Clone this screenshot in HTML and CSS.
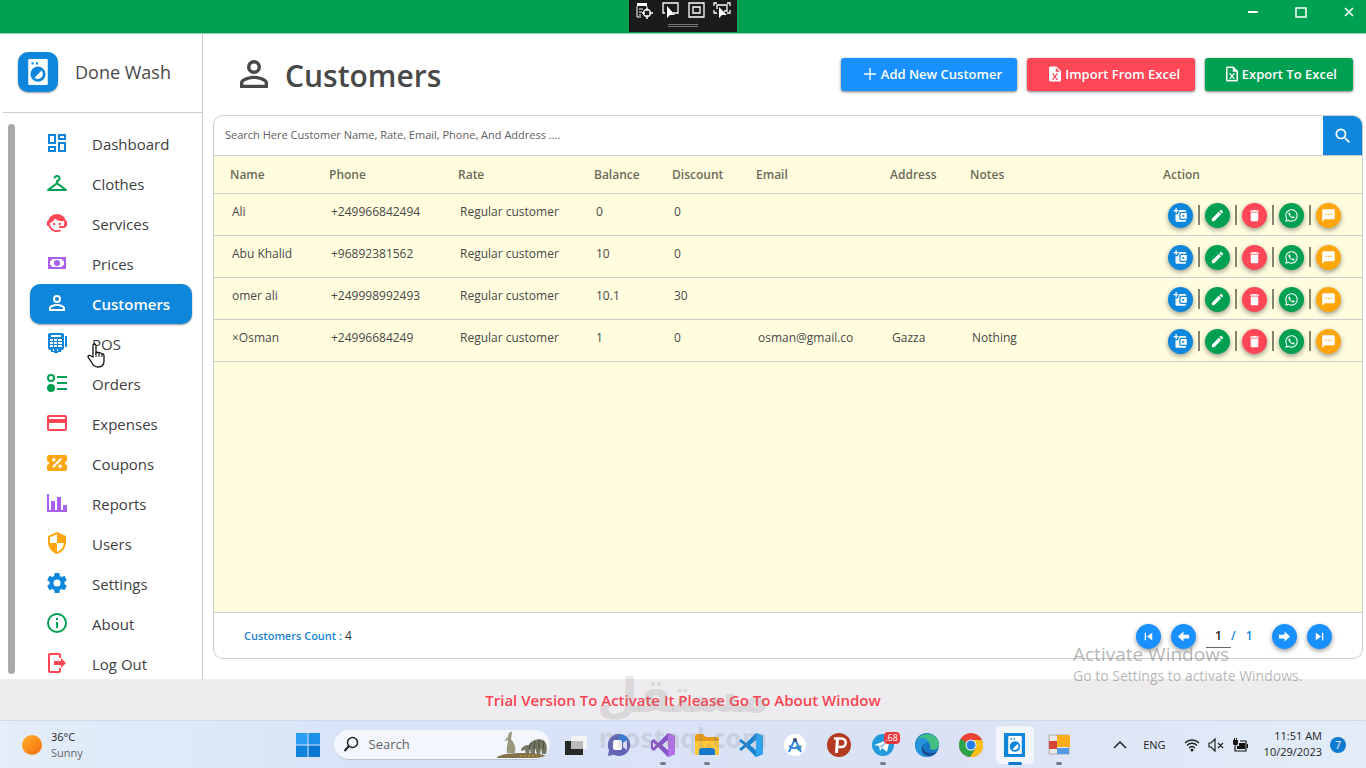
FILE: index.html
```html
<!DOCTYPE html>
<html lang="en">
<head>
<meta charset="utf-8">
<title>Done Wash - Customers</title>
<link rel="stylesheet" href="styles.css">
</head>
<body>
<svg class="sprite" aria-hidden="true">
  <symbol id="i-user" viewBox="0 0 24 24"><path d="M12,4A4,4 0 0,1 16,8A4,4 0 0,1 12,12A4,4 0 0,1 8,8A4,4 0 0,1 12,4M12,6A2,2 0 0,0 10,8A2,2 0 0,0 12,10A2,2 0 0,0 14,8A2,2 0 0,0 12,6M12,13C14.67,13 20,14.33 20,17V20H4V17C4,14.33 9.33,13 12,13M12,14.9C9.03,14.9 5.9,16.36 5.9,17V18.1H18.1V17C18.1,16.36 14.97,14.9 12,14.9Z"/></symbol>
  <symbol id="i-dash" viewBox="0 0 24 24"><path d="M19,5V7H15V5H19M9,5V11H5V5H9M19,13V19H15V13H19M9,17V19H5V17H9M21,3H13V9H21V3M11,3H3V13H11V3M21,11H13V21H21V11M11,15H3V21H11V15Z"/></symbol>
  <symbol id="i-hanger" viewBox="0 0 24 24"><path d="M21.6 18.2L13 11.75v-.91c1.65-.49 2.8-2.17 2.43-4.05-.26-1.31-1.3-2.4-2.61-2.7C10.54 3.57 8.5 5.3 8.5 7.5h2c0-.83.67-1.5 1.5-1.5s1.5.67 1.5 1.5c0 .84-.69 1.52-1.53 1.5-.54-.01-.97.45-.97.99v1.76L2.4 18.2c-.77.58-.36 1.8.6 1.8h18c.96 0 1.37-1.22.6-1.8zM6 18l6-4.5 6 4.5H6z"/></symbol>
  <symbol id="i-agent" viewBox="0 0 24 24"><path d="M12 3C7.6 3 4 6.100 3.200 10.100H2v4.600h1.300C4.500 18.300 7.900 21 12 21c1.500 0 2.700-.3 3.800-.8l-.8-1.600c-.9.4-1.900.6-3 .6-4 0-7.200-3.200-7.200-7.200 2.700-.8 4.500-2.400 5-4.600 2 1.900 5 2.900 9.200 2.700.6 2 .4 3.600-.4 5h-4.500v1.800h5.500l2.400-2.200V10.100h-1.100C20.100 6.100 16.400 3 12 3z"/><circle cx="9.200" cy="13" r="1.200"/><circle cx="14.800" cy="13" r="1.200"/></symbol>
  <symbol id="i-cash" viewBox="0 0 24 24"><path fill-rule="evenodd" d="M3 6h18v12H3zM7 8a2 2 0 0 1-2 2v4a2 2 0 0 1 2 2h10a2 2 0 0 1 2-2v-4a2 2 0 0 1-2-2zM12 9a3 3 0 1 1 0 6 3 3 0 0 1 0-6z"/></symbol>
  <symbol id="i-pos" viewBox="0 0 24 24"><path fill-rule="evenodd" d="M5 2h12a2 2 0 0 1 2 2v13a2 2 0 0 1-2 2h-1v2h-3v1H9v-1H6v-2H5a2 2 0 0 1-2-2V4a2 2 0 0 1 2-2zM6 4v2h10V4zM5 8v2h3V8zM9 8v2h3V8zM13 8v2h4V8zM5 11v2h3v-2zM9 11v2h3v-2zM13 11v2h4v-2zM5 14v2h3v-2zM9 14v2h3v-2zM13 14v2h4v-2zM8 18v2h1v-2zM12 18v2h1v-2z"/><path d="M20 5h2v11h-2z"/></symbol>
  <symbol id="i-orders" viewBox="0 0 24 24"><path fill-rule="evenodd" d="M6 3a4 4 0 1 1 0 8 4 4 0 0 1 0-8zM6 5a2 2 0 1 0 0 4 2 2 0 0 0 0-4z"/><circle cx="6" cy="17" r="4"/><path d="M12 5h10v2H12zM12 11h10v2H12zM12 17h10v2H12z"/></symbol>
  <symbol id="i-card" viewBox="0 0 24 24"><path d="M20,8H4V6H20M20,18H4V12H20M20,4H4C2.890,4 2,4.890 2,6V18A2,2 0 0,0 4,20H20A2,2 0 0,0 22,18V6C22,4.890 21.100,4 20,4Z"/></symbol>
  <symbol id="i-coupon" viewBox="0 0 24 24"><path d="M4,4A2,2 0 0,0 2,6V10A2,2 0 0,1 4,12A2,2 0 0,1 2,14V18A2,2 0 0,0 4,20H20A2,2 0 0,0 22,18V14A2,2 0 0,1 20,12A2,2 0 0,1 22,10V6A2,2 0 0,0 20,4H4M15.500,7L17,8.500L8.500,17L7,15.500L15.500,7M8.810,7.040C9.790,7.040 10.580,7.830 10.580,8.810A1.770,1.770 0 0,1 8.810,10.580C7.830,10.580 7.040,9.790 7.040,8.810A1.770,1.770 0 0,1 8.810,7.040M15.190,13.420C16.170,13.420 16.960,14.210 16.960,15.190A1.770,1.770 0 0,1 15.190,16.960C14.210,16.960 13.420,16.170 13.420,15.190A1.770,1.770 0 0,1 15.190,13.420Z"/></symbol>
  <symbol id="i-chart" viewBox="0 0 24 24"><path d="M2 3h2v16h2v-9h4v9h2V6h4v13h2v-5h4v7H2z"/></symbol>
  <symbol id="i-shield" viewBox="0 0 24 24"><path fill-rule="evenodd" d="M12 1l9 4v6c0 5.550-3.840 10.740-9 12-5.160-1.260-9-6.450-9-12V5zM12 3.200L5 6.300V12h7v8.900c3.700-1.100 6.400-4.900 6.900-8.900H12z"/></symbol>
  <symbol id="i-cog" viewBox="0 0 24 24"><path d="M12,15.500A3.500,3.500 0 0,1 8.500,12A3.500,3.500 0 0,1 12,8.500A3.500,3.500 0 0,1 15.500,12A3.500,3.500 0 0,1 12,15.500M19.430,12.970C19.470,12.650 19.500,12.330 19.500,12C19.500,11.670 19.470,11.340 19.430,11L21.540,9.370C21.730,9.220 21.780,8.950 21.660,8.730L19.660,5.270C19.540,5.050 19.270,4.960 19.050,5.050L16.560,6.050C16.040,5.660 15.500,5.320 14.870,5.070L14.500,2.420C14.460,2.180 14.250,2 14,2H10C9.750,2 9.540,2.180 9.500,2.420L9.130,5.070C8.500,5.320 7.960,5.660 7.440,6.050L4.950,5.050C4.730,4.960 4.460,5.050 4.340,5.270L2.340,8.730C2.210,8.950 2.270,9.220 2.460,9.370L4.570,11C4.530,11.340 4.500,11.670 4.500,12C4.500,12.330 4.530,12.650 4.570,12.970L2.460,14.630C2.270,14.780 2.210,15.050 2.340,15.270L4.340,18.730C4.460,18.950 4.730,19.030 4.950,18.950L7.440,17.940C7.960,18.340 8.500,18.680 9.130,18.930L9.500,21.580C9.540,21.820 9.750,22 10,22H14C14.250,22 14.460,21.820 14.500,21.580L14.870,18.930C15.500,18.670 16.040,18.340 16.560,17.940L19.050,18.950C19.270,19.030 19.540,18.950 19.660,18.730L21.660,15.270C21.780,15.050 21.730,14.780 21.540,14.630L19.430,12.970Z"/></symbol>
  <symbol id="i-info" viewBox="0 0 24 24"><path d="M11,9H13V7H11M12,20C7.590,20 4,16.410 4,12C4,7.590 7.590,4 12,4C16.410,4 20,7.590 20,12C20,16.410 16.410,20 12,20M12,2A10,10 0 0,0 2,12A10,10 0 0,0 12,22A10,10 0 0,0 22,12A10,10 0 0,0 12,2M11,17H13V11H11V17Z"/></symbol>
  <symbol id="i-logout" viewBox="0 0 24 24"><path d="M5 2h9a2 2 0 0 1 2 2v3h-2V4H5v16h9v-3h2v3a2 2 0 0 1-2 2H5a2 2 0 0 1-2-2V4a2 2 0 0 1 2-2z"/><path d="M9 10h7V7l5 5-5 5v-3H9z"/></symbol>
  <symbol id="i-washer" viewBox="0 0 24 24"><path fill-rule="evenodd" d="M4 0h16a1 1 0 0 1 1 1v22a1 1 0 0 1-1 1H4a1 1 0 0 1-1-1V1a1 1 0 0 1 1-1zM12 7a7 7 0 1 0 0 14 7 7 0 0 0 0-14zM6 3v2h2V3zM10 3v2h2V3z"/><path d="M8.800 17.200a4.600 4.600 0 0 0 6.500-6.500z"/></symbol>
  <symbol id="i-plus" viewBox="0 0 24 24"><path d="M11 3h2v8h8v2h-8v8h-2v-8H3v-2h8z"/></symbol>
  <symbol id="i-xls" viewBox="0 0 24 24"><path fill-rule="evenodd" d="M6 2h8l6 6v12a2 2 0 0 1-2 2H6a2 2 0 0 1-2-2V4a2 2 0 0 1 2-2zM13 3.500V9h5.500zM8 11l2.900 4.500L8 20h2l2-3.300L14 20h2l-2.900-4.500L16 11h-2l-2 3.200L10 11z"/></symbol>
  <symbol id="i-xlso" viewBox="0 0 24 24"><path fill-rule="evenodd" d="M6 2h8l6 6v12a2 2 0 0 1-2 2H6a2 2 0 0 1-2-2V4a2 2 0 0 1 2-2zM6 4v16h12V9h-5V4zM8 11l2.900 4L8 19h2l2-3 2 3h2l-2.900-4L16 11h-2l-2 2.800L10 11z"/></symbol>
  <symbol id="i-search" viewBox="0 0 24 24"><path d="M15.500 14h-.79l-.28-.27A6.470 6.470 0 0 0 16 9.500 6.500 6.500 0 1 0 9.500 16c1.610 0 3.090-.59 4.230-1.570l.27.28v.79l5 4.990L20.490 19l-4.990-5zm-6 0C7.010 14 5 11.990 5 9.500S7.010 5 9.500 5 14 7.010 14 9.500 11.990 14 9.500 14z"/></symbol>
  <symbol id="i-wallet" viewBox="0 0 24 24"><path d="M4 0h2v3h3v2H6v3H4V5H1V3h3z"/><path fill-rule="evenodd" d="M10 3h9a2 2 0 0 1 2 2v1h-8a3 3 0 0 0-3 3v7a3 3 0 0 0 3 3h8v1a2 2 0 0 1-2 2H6a2 2 0 0 1-2-2V10h4V7h2zM13 8h9v9h-9a1 1 0 0 1-1-1V9a1 1 0 0 1 1-1zM15 11v3h3v-3z"/></symbol>
  <symbol id="i-pencil" viewBox="0 0 24 24"><path d="M20.710,7.040C21.100,6.650 21.100,6 20.710,5.630L18.370,3.290C18,2.900 17.350,2.900 16.960,3.290L15.120,5.120L18.870,8.870M3,17.250V21H6.750L17.810,9.930L14.060,6.180L3,17.250Z"/></symbol>
  <symbol id="i-trash" viewBox="0 0 24 24"><path d="M19,4H15.500L14.500,3H9.500L8.500,4H5V6H19M6,19A2,2 0 0,0 8,21H16A2,2 0 0,0 18,19V7H6V19Z"/></symbol>
  <symbol id="i-wa" viewBox="0 0 24 24"><path d="M12.040 2C6.580 2 2.130 6.450 2.130 11.910C2.130 13.660 2.590 15.360 3.450 16.860L2.050 22L7.300 20.620C8.750 21.410 10.380 21.830 12.040 21.830C17.500 21.830 21.950 17.380 21.950 11.920C21.950 9.270 20.920 6.780 19.050 4.910C17.180 3.030 14.690 2 12.040 2M12.050 3.670C14.250 3.670 16.310 4.530 17.870 6.090C19.420 7.650 20.280 9.720 20.280 11.920C20.280 16.460 16.580 20.150 12.040 20.150C10.560 20.150 9.110 19.760 7.850 19L7.550 18.830L4.430 19.650L5.260 16.610L5.060 16.290C4.240 15 3.800 13.470 3.800 11.910C3.810 7.370 7.500 3.670 12.050 3.670"/><path d="M8.500 7.300c-.5 0-1.400.7-1.400 2 0 3 4.600 7.300 7.700 7.300 1.400 0 2.300-.9 2.300-2.200l-2.700-1.300-1.300 1.400c-1.500-.6-2.700-1.700-3.400-3l.9-1.300-1.100-2.700c-.2-.2-.5-.2-1-.2z"/></symbol>
  <symbol id="i-chat" viewBox="0 0 24 24"><path d="M20 2H4a2 2 0 0 0-2 2v18l4-4h14a2 2 0 0 0 2-2V4a2 2 0 0 0-2-2zM7 9h2v2H7zm4 0h2v2h-2zm4 0h2v2h-2z"/></symbol>
  <symbol id="i-first" viewBox="0 0 24 24"><path d="M18 18V6l-8.500 6zM6,6H8V18H6z"/></symbol>
  <symbol id="i-last" viewBox="0 0 24 24"><path d="M6 18V6l8.500 6zM16,6H18V18H16z"/></symbol>
  <symbol id="i-prev" viewBox="0 0 24 24"><path d="M3 12l9-8v5h9v6h-9v5z"/></symbol>
  <symbol id="i-next" viewBox="0 0 24 24"><path d="M21 12l-9-8v5H3v6h9v5z"/></symbol>
</svg>

<header class="titlebar">
  <div class="debugbar">
    <svg class="dbg" viewBox="0 0 18 18"><path d="M2 2h10v3H2z" fill="#fff"/><path d="M2 5v11h4M12 5v2M4 8h4M4 11h3M4 14h2" fill="none" stroke="#fff"/><circle cx="12" cy="12" r="3.500" fill="none" stroke="#fff" stroke-width="1.500"/><path d="M12 7v3M12 14v4M7 12h3M14 12h4" stroke="#fff" stroke-width="1.500"/></svg>
    <svg class="dbg" viewBox="0 0 18 18"><path d="M4 12H2V2h15v10h-5" fill="none" stroke="#fff" stroke-width="1.300"/><path d="M6 5v12l3-3h5z" fill="#fff"/></svg>
    <svg class="dbg" viewBox="0 0 18 18"><path d="M2 2h15v14H2zM6 6h7v6H6z" fill="none" stroke="#fff" stroke-width="1.300"/></svg>
    <svg class="dbg" viewBox="0 0 18 18"><path d="M1 5V2h3M14 2h3v3M17 9v3h-3M1 9v3h3M4 8V4h10v6h-3" fill="none" stroke="#fff" stroke-width="1.300"/><path d="M6 6v11l3-3h5z" fill="#fff"/></svg>
    <span class="grip"></span>
  </div>
  <div class="wincontrols">
    <button type="button" aria-label="Minimize"><svg viewBox="0 0 12 12"><path d="M1 6h10" stroke="#fff" stroke-width="2"/></svg></button>
    <button type="button" aria-label="Maximize"><svg viewBox="0 0 12 12"><path d="M1 2h10v9H1z" fill="none" stroke="#fff" stroke-width="1.500"/></svg></button>
    <button type="button" aria-label="Close"><svg viewBox="0 0 12 12"><path d="M2 2l8 8M10 2l-8 8" stroke="#fff" stroke-width="1.500"/></svg></button>
  </div>
</header>

<div class="app">
  <aside class="sidebar">
    <div class="brand">
      <span class="logo"><svg><use href="#i-washer"/></svg></span>
      <span>Done Wash</span>
    </div>
    <div class="navwrap">
      <div class="scrollbar"></div>
      <nav class="nav">
        <a href="#" class="c-blue"><svg><use href="#i-dash"/></svg><span>Dashboard</span></a>
        <a href="#" class="c-green"><svg><use href="#i-hanger"/></svg><span>Clothes</span></a>
        <a href="#" class="c-red"><svg><use href="#i-agent"/></svg><span>Services</span></a>
        <a href="#" class="c-purple"><svg><use href="#i-cash"/></svg><span>Prices</span></a>
        <a href="#" class="active"><svg><use href="#i-user"/></svg><span>Customers</span></a>
        <a href="#" class="c-blue"><svg><use href="#i-pos"/></svg><span>POS</span></a>
        <a href="#" class="c-green"><svg><use href="#i-orders"/></svg><span>Orders</span></a>
        <a href="#" class="c-red"><svg><use href="#i-card"/></svg><span>Expenses</span></a>
        <a href="#" class="c-orange"><svg><use href="#i-coupon"/></svg><span>Coupons</span></a>
        <a href="#" class="c-purple"><svg><use href="#i-chart"/></svg><span>Reports</span></a>
        <a href="#" class="c-orange"><svg><use href="#i-shield"/></svg><span>Users</span></a>
        <a href="#" class="c-blue"><svg><use href="#i-cog"/></svg><span>Settings</span></a>
        <a href="#" class="c-green"><svg><use href="#i-info"/></svg><span>About</span></a>
        <a href="#" class="c-red"><svg><use href="#i-logout"/></svg><span>Log Out</span></a>
      </nav>
    </div>
  </aside>

  <main class="content">
    <div class="pagehead">
      <h1><svg><use href="#i-user"/></svg>Customers</h1>
      <div class="tools">
        <button type="button" class="btn add"><svg><use href="#i-plus"/></svg>Add New Customer</button>
        <button type="button" class="btn import"><svg><use href="#i-xls"/></svg>Import From Excel</button>
        <button type="button" class="btn export"><svg><use href="#i-xlso"/></svg>Export To Excel</button>
      </div>
    </div>

    <section class="card">
      <form class="search">
        <input type="text" aria-label="Search customers" placeholder="Search Here Customer Name, Rate, Email, Phone, And Address ....">
        <button type="button" aria-label="Search"><svg><use href="#i-search"/></svg></button>
      </form>
      <div class="grid">
        <table>
          <colgroup><col class="w-name"><col class="w-phone"><col class="w-rate"><col class="w-balance"><col class="w-discount"><col class="w-email"><col class="w-address"><col class="w-notes"><col class="w-action"></colgroup>
          <thead><tr><th>Name</th><th>Phone</th><th>Rate</th><th>Balance</th><th>Discount</th><th>Email</th><th>Address</th><th>Notes</th><th>Action</th></tr></thead>
          <tbody>
            <tr><td>Ali</td><td>+249966842494</td><td>Regular customer</td><td>0</td><td>0</td><td></td><td></td><td></td><td class="acts"><div class="actions"><button type="button" class="round b-blue" aria-label="Add balance"><svg><use href="#i-wallet"/></svg></button><i></i><button type="button" class="round b-green" aria-label="Edit"><svg><use href="#i-pencil"/></svg></button><i></i><button type="button" class="round b-red" aria-label="Delete"><svg><use href="#i-trash"/></svg></button><i></i><button type="button" class="round b-green" aria-label="WhatsApp"><svg><use href="#i-wa"/></svg></button><i></i><button type="button" class="round b-orange" aria-label="Message"><svg><use href="#i-chat"/></svg></button></div></td></tr>
            <tr><td>Abu Khalid</td><td>+96892381562</td><td>Regular customer</td><td>10</td><td>0</td><td></td><td></td><td></td><td class="acts"><div class="actions"><button type="button" class="round b-blue" aria-label="Add balance"><svg><use href="#i-wallet"/></svg></button><i></i><button type="button" class="round b-green" aria-label="Edit"><svg><use href="#i-pencil"/></svg></button><i></i><button type="button" class="round b-red" aria-label="Delete"><svg><use href="#i-trash"/></svg></button><i></i><button type="button" class="round b-green" aria-label="WhatsApp"><svg><use href="#i-wa"/></svg></button><i></i><button type="button" class="round b-orange" aria-label="Message"><svg><use href="#i-chat"/></svg></button></div></td></tr>
            <tr><td>omer ali</td><td>+249998992493</td><td>Regular customer</td><td>10.1</td><td>30</td><td></td><td></td><td></td><td class="acts"><div class="actions"><button type="button" class="round b-blue" aria-label="Add balance"><svg><use href="#i-wallet"/></svg></button><i></i><button type="button" class="round b-green" aria-label="Edit"><svg><use href="#i-pencil"/></svg></button><i></i><button type="button" class="round b-red" aria-label="Delete"><svg><use href="#i-trash"/></svg></button><i></i><button type="button" class="round b-green" aria-label="WhatsApp"><svg><use href="#i-wa"/></svg></button><i></i><button type="button" class="round b-orange" aria-label="Message"><svg><use href="#i-chat"/></svg></button></div></td></tr>
            <tr><td>×Osman</td><td>+24996684249</td><td>Regular customer</td><td>1</td><td>0</td><td>osman@gmail.co</td><td>Gazza</td><td>Nothing</td><td class="acts"><div class="actions"><button type="button" class="round b-blue" aria-label="Add balance"><svg><use href="#i-wallet"/></svg></button><i></i><button type="button" class="round b-green" aria-label="Edit"><svg><use href="#i-pencil"/></svg></button><i></i><button type="button" class="round b-red" aria-label="Delete"><svg><use href="#i-trash"/></svg></button><i></i><button type="button" class="round b-green" aria-label="WhatsApp"><svg><use href="#i-wa"/></svg></button><i></i><button type="button" class="round b-orange" aria-label="Message"><svg><use href="#i-chat"/></svg></button></div></td></tr>
          </tbody>
        </table>
      </div>
      <footer class="cardfoot">
        <p class="count">Customers Count : <b>4</b></p>
        <div class="pager">
          <button type="button" class="round b-bright" aria-label="First page"><svg><use href="#i-first"/></svg></button>
          <button type="button" class="round b-bright" aria-label="Previous page"><svg><use href="#i-prev"/></svg></button>
          <div class="pages"><input type="text" value="1" aria-label="Page"><span>/</span><span>1</span></div>
          <button type="button" class="round b-bright" aria-label="Next page"><svg><use href="#i-next"/></svg></button>
          <button type="button" class="round b-bright" aria-label="Last page"><svg><use href="#i-last"/></svg></button>
        </div>
      </footer>
    </section>
  </main>
</div>

<div class="trial">Trial Version To Activate It Please Go To About Window</div>

<footer class="taskbar">
  <div class="weather">
    <svg viewBox="0 0 20 20"><defs><linearGradient id="sun" x1="0" y1="0" x2="1" y2="1"><stop offset="0" stop-color="#ffb52e"/><stop offset="1" stop-color="#f5690a"/></linearGradient></defs><circle cx="10" cy="10" r="10" fill="url(#sun)"/></svg>
    <div><div>36°C</div><div class="dim">Sunny</div></div>
  </div>
  <div class="apps">
    <button type="button" class="start" aria-label="Start"><svg viewBox="0 0 24 24"><path d="M0 0h11.500v11.500H0z" fill="#2a9df4"/><path d="M12.500 0H24v11.500H12.500z" fill="#1b8fe8"/><path d="M0 12.500h11.500V24H0z" fill="#1084dd"/><path d="M12.500 12.500H24V24H12.500z" fill="#0a76cf"/></svg></button>
    <label class="tasksearch">
      <svg class="lens" viewBox="0 0 16 16"><circle cx="9.500" cy="6.500" r="5" fill="none" stroke="#222" stroke-width="1.500"/><path d="M6 10l-4.500 5" stroke="#222" stroke-width="2"/></svg>
      <input type="text" placeholder="Search">
      <svg class="art" viewBox="0 0 50 28"><path d="M0 27c6-3 14-4 26-4s20 1 23 3l-9 2H0z" fill="#81724d"/><path d="M10 23c-1-6 1-9 1-13l-4 1 4-4c0-4 3-6 4-5l-1 7c4 5 5 9 4 14z" fill="#99977d"/><path d="M24 21c0-4 4-6 8-6 2-5 10-7 14-5 5 3 4 10 3 14h-4l-1-6-1 6h-3l-2-6v6h-4l-1-5-1 5h-3l-1-4z" fill="#767762"/><path d="M34 13l-2 6M38 11l-1 8M42 10v9M46 11l1 9" stroke="#454b3d"/><path d="M23 26h17" stroke="#d9a21c" stroke-dasharray="2 2"/></svg>
    </label>
    <div class="pinned">
    <button type="button" aria-label="Task view"><svg viewBox="0 0 24 24"><path d="M8 3h16v13H8z" fill="#f4f4f4"/><path d="M2 8h18v14H2z" fill="#292929"/><path d="M8 8h12v8H8z" fill="#bbb"/></svg></button>
    <button type="button" aria-label="Chat"><svg viewBox="0 0 24 24"><path d="M12 1a11 11 0 1 1-5 20.700L1 23l1-6A11 11 0 0 1 12 1z" fill="#6265b5"/><path d="M12 1a11 11 0 0 1 10 7L10 12z" fill="#397bd5"/><rect x="6" y="7" width="9" height="10" rx="2" fill="#fff"/><path d="M16 10l4-3v10l-4-3z" fill="#dcdffc"/></svg></button>
    <button type="button" class="running" aria-label="Visual Studio"><svg viewBox="0 0 24 24"><path d="M17 0l7 3v18l-7 3L7 14l-4 4-3-2V8l3-2 4 4zM17 7l-6 5 6 5zM2 9v6l3-3z" fill="#8654c9" fill-rule="evenodd"/><path d="M17 0l7 3v18l-7 3z" fill="#b273ea"/></svg></button>
    <button type="button" class="running" aria-label="File Explorer"><svg viewBox="0 0 24 24"><path d="M0 3q0-2 2-2h6l3 3h11q2 0 2 2v15H0z" fill="#e89b16"/><path d="M0 8h24v14H0z" fill="#ffc83d"/><path d="M4 22v-4q0-3 3-3h10q3 0 3 3v4z" fill="#1678ca"/></svg></button>
    <button type="button" aria-label="VS Code"><svg viewBox="0 0 24 24"><path d="M17 0l7 3v18l-7 3L7 14l-5 4-2-2 5-4-5-4 2-2 5 4zM17 7l-6 5 6 5z" fill="#1583d1" fill-rule="evenodd"/><path d="M17 0l7 3v18l-7 3z" fill="#2ca5f1"/></svg></button>
    <button type="button" aria-label="Android Studio"><svg viewBox="0 0 24 24"><circle cx="12" cy="12" r="11" fill="#fff"/><path d="M12 13h7a8 8 0 0 1-4 5z" fill="#31b96b"/><path d="M12 6L6 19M12 6l6 13M6 13c4 3 8 3 12 0" fill="none" stroke="#3481de" stroke-width="2"/><circle cx="12" cy="7" r="2" fill="#384d71"/></svg></button>
    <button type="button" aria-label="Psiphon"><svg viewBox="0 0 24 24"><circle cx="12" cy="12" r="12" fill="#b43a21"/><path d="M7 5.500h7.500a4 4 0 0 1 0 8.500H11" fill="none" stroke="#fff" stroke-width="2.500"/><path d="M9 5h3l-1 15H8z" fill="#fff"/></svg></button>
    <button type="button" class="running" aria-label="Telegram"><svg viewBox="0 0 24 24"><circle cx="12" cy="12" r="11" fill="#229bdc"/><path d="M3 12l16-6-3 13-5-4-2 3-1-5z" fill="#fff"/><path d="M8 13l8-4-5 6z" fill="#9bcde8"/></svg><span class="pill">.68</span></button>
    <button type="button" aria-label="Edge"><svg viewBox="0 0 24 24"><circle cx="12" cy="12" r="12" fill="#1676c6"/><path d="M2 7C7-2 23-1 24 11c0 7-9 7-9 4 2-6-6-10-13-8z" fill="#42be81"/><path d="M2 7c5-5 12-1 12 3-3-2-6 1-5 5 1 5 7 8 12 5-4 5-13 5-17 1C0 18-1 11 2 7z" fill="#2795dc"/><path d="M9 11c-3 6 4 12 13 8-4 5-13 6-15-1-1-3 0-5 2-7z" fill="#174a91"/></svg></button>
    <button type="button" aria-label="Chrome"><svg viewBox="0 0 24 24"><circle cx="12" cy="12" r="12" fill="#e94335"/><path d="M12 12L1.600 6A12 12 0 0 0 11 24l6-9z" fill="#2ba24c"/><path d="M12 7h11a12 12 0 0 1-12 17l6-9z" fill="#fbc116"/><circle cx="12" cy="12" r="5.500" fill="#fff"/><circle cx="12" cy="12" r="4.500" fill="#2b7be5"/></svg></button>
    <button type="button" class="current" aria-label="Done Wash"><span class="washapp"><svg><use href="#i-washer"/></svg></span></button>
    <button type="button" class="running" aria-label="Windows app"><svg viewBox="0 0 24 24"><path d="M2 2h20v19H2z" fill="#e9e9e9" stroke="#aaa"/><path d="M2 8h8v8H2z" fill="#d74335"/><path d="M10 2h13v12H10z" fill="#f9ad1b"/><path d="M10 15h12v6H10z" fill="#539be5"/></svg></button>
    </div>
  </div>
  <div class="tray">
    <svg class="chev" viewBox="0 0 14 14"><path d="M1 10l6-6 6 6" fill="none" stroke="#222" stroke-width="1.500"/></svg>
    <span class="lang">ENG</span>
    <svg viewBox="0 0 16 16"><path d="M1 6c4-4 10-4 14 0M3 8.500c3-3 7-3 10 0M5 11c2-2 4-2 6 0" fill="none" stroke="#222" stroke-width="1.300"/><circle cx="8" cy="13" r="1.500" fill="#222"/></svg>
    <svg viewBox="0 0 16 16"><path d="M1 6v4h2l4 4V2L3 6zM10 6l5 5M15 6l-5 5" fill="none" stroke="#222" stroke-width="1.200"/></svg>
    <svg viewBox="0 0 16 16"><path d="M7 6h6v6H5V9h2z" fill="#111"/><path d="M8 4h6v10H3V9M15.500 7v4" fill="none" stroke="#111" stroke-width="1.200"/><path d="M1 3h5v3a2.500 2.500 0 0 1-5 0zM2 1h1v2H2zM4 1h1v2H4z" fill="#111"/></svg>
    <div class="clock"><div>11:51 AM</div><div>10/29/2023</div></div>
    <span class="notif">7</span>
  </div>
</footer>

<div class="activate"><div class="big">Activate Windows</div><div>Go to Settings to activate Windows.</div></div>
<div class="stamp"><div class="ar" lang="ar" dir="rtl">مستقل</div><div class="en">mostaql.com</div></div>
<svg class="cursor" viewBox="0 0 18 25"><path d="M6 14V3q0-2 1.500-2T9 3v7q1-1.500 3 0 1-1 3 1 2-.5 2 2v5q0 6-6 6-4 0-6-4l-4-6q0-2 2-1.500z" fill="#fff" stroke="#111" stroke-width="1.300"/><path d="M9 10v4M12 10v4M15 11v3" stroke="#111"/></svg>
</body>
</html>
```
FILE: styles.css
```css
* { box-sizing: border-box; }
body {
  margin: 0;
  height: 100vh;
  display: flex;
  flex-direction: column;
  position: relative;
  overflow: hidden;
  background: #fff;
  color: #484848;
  font: 13px/16px "Open Sans", "Noto Sans", sans-serif;
}
button { font: inherit; border: 0; padding: 0; background: none; color: inherit; }
input { font: inherit; border: 0; outline: 0; background: none; min-width: 0; }
svg { display: block; fill: currentColor; flex: none; }
.sprite { position: absolute; width: 0; height: 0; }

.titlebar {
  height: 34px;
  flex: none;
  display: grid;
  grid-template-columns: 1fr auto 1fr;
  background: #00a052;
  border-bottom: 1px solid #8fcdae;
}
.debugbar {
  grid-column: 2;
  width: 108px;
  height: 32px;
  display: flex;
  flex-wrap: wrap;
  justify-content: center;
  gap: 0 8px;
  background: #1b1b1b;
}
.dbg { width: 18px; height: 18px; margin-top: 1px; }
.grip { width: 30px; height: 3px; margin: 0 30px; border: solid #777; border-width: 1px 0; }
.wincontrols { display: flex; justify-content: flex-end; gap: 36px; padding: 6px 11px 0 0; }
.wincontrols button { width: 12px; height: 12px; }
.wincontrols svg { width: 12px; height: 12px; }

.app { flex: 1; min-height: 0; display: flex; }
.sidebar {
  width: 203px;
  flex: none;
  display: flex;
  flex-direction: column;
  border-right: 1px solid #cbcbd0;
}
.brand {
  height: 79px;
  margin-left: 3px;
  padding: 0 0 2px 15px;
  display: flex;
  align-items: center;
  gap: 17px;
  flex: none;
  border-bottom: 1px solid #cbcbd0;
  font-size: 18px;
  line-height: 24px;
  font-weight: 500;
}
.logo {
  width: 40px;
  height: 40px;
  display: grid;
  place-items: center;
  border-radius: 10px;
  background: #0e86dc;
  color: #fff;
  box-shadow: 0 1px 2px #0006;
}
.logo svg { width: 26px; height: 26px; }
.navwrap { flex: 1; min-height: 0; display: flex; padding-top: 11px; overflow: hidden; }
.scrollbar { width: 7px; margin: 0 15px 5px 8px; border-radius: 4px; background: #a9a9a9; }
.nav { flex: 1; margin-right: 10px; }
.nav a {
  height: 40px;
  display: flex;
  align-items: center;
  gap: 23px;
  padding-left: 15px;
  border-radius: 10px;
  color: #404040;
  font-size: 15px;
  font-weight: 500;
  text-decoration: none;
}
.nav svg { width: 24px; height: 24px; margin-bottom: 2px; }
.nav .active { background: #0e86dc; color: #fff; font-weight: 600; box-shadow: 0 1px 2px #0006; }
.c-blue svg { color: #0e86dc; }
.c-green svg { color: #00a052; }
.c-red svg { color: #ff4655; }
.c-purple svg { color: #a960f0; }
.c-orange svg { color: #ffa60c; }

.content { flex: 1; min-width: 0; display: flex; flex-direction: column; padding: 0 3px 20px 10px; }
.pagehead { height: 81px; flex: none; display: flex; align-items: center; justify-content: space-between; padding: 0 10px 0 20px; }
h1 { margin: 0; padding-top: 2px; display: flex; align-items: center; gap: 10px; font-size: 30px; line-height: 40px; font-weight: 600; color: #484848; }
h1 svg { width: 42px; height: 42px; margin-bottom: 4px; }
.tools { display: flex; gap: 10px; }
.btn {
  height: 33px;
  display: flex;
  align-items: center;
  justify-content: flex-end;
  gap: 1px;
  padding-bottom: 1px;
  border-radius: 3px;
  color: #fff;
  font-size: 13px;
  font-weight: 600;
  box-shadow: 0 1px 3px #0008;
}
.btn svg { width: 18px; height: 18px; }
.add { width: 176px; padding-right: 15px; background: #1890ff; }
.add svg { width: 16px; height: 16px; margin-right: 2px; }
.import { width: 168px; padding-right: 15px; background: #ff4757; }
.export { width: 148px; padding-right: 16px; background: #00a052; }

.card { flex: 1; min-height: 0; display: flex; flex-direction: column; border: 1px solid #cbcbd0; border-radius: 10px; overflow: hidden; }
.search { height: 40px; flex: none; display: flex; border-bottom: 1px solid #cbcbd0; }
.search input { flex: 1; padding: 0 11px 1px; font-size: 11px; }
.search input::placeholder { color: #5e5e5e; opacity: 1; }
.search button { width: 39px; display: grid; place-items: center; background: #0e86dc; color: #fff; }
.search button svg { width: 20px; height: 20px; }
.grid { flex: 1; min-height: 0; background: #fffdde; }
table { width: 100%; table-layout: fixed; border-collapse: collapse; }
.w-name { width: 99px; }
.w-phone { width: 129px; }
.w-rate { width: 136px; }
.w-balance { width: 78px; }
.w-discount { width: 84px; }
.w-email { width: 134px; }
.w-address { width: 80px; }
.w-notes { width: 193px; }
.w-action { width: 215px; }
tr { border-bottom: 1px solid #cbcbd0; }
th { height: 37px; padding: 2px 0 0 16px; text-align: left; font-size: 12px; font-weight: 600; color: #6c6b58; }
td { height: 42px; padding: 10px 0 0 18px; vertical-align: top; font-size: 12px; white-space: nowrap; }
td.acts { padding: 9px 0 0 21px; }
.actions { display: flex; align-items: center; gap: 5px; }
.actions i { width: 2px; height: 20px; background: #85836f; }
.round { width: 25px; height: 25px; border-radius: 50%; display: grid; place-items: center; flex: none; color: #fff; box-shadow: 0 2px 5px #0006; }
.round svg { width: 15px; height: 15px; }
.b-blue { background: #0e86dc; }
.b-green { background: #00a052; }
.b-red { background: #ff4757; }
.b-orange { background: #ffa60c; }
.b-bright { background: #1890ff; }
.cardfoot { height: 46px; flex: none; display: flex; align-items: center; justify-content: space-between; padding: 1px 30px 0; border-top: 1px solid #cbcbd0; font-size: 12px; }
.count { margin: 0; font-size: 11px; font-weight: 600; color: #1b83cf; }
.count b { font-size: 12px; font-weight: 500; color: #333; }
.pager { display: flex; align-items: center; gap: 10px; }
.pages { display: flex; align-items: center; width: 56px; color: #0e86dc; font-weight: 600; }
.pages input { width: 25px; height: 24px; padding: 0; text-align: center; border-bottom: 1px solid #666; color: #222; }
.pages span + span { margin-left: 10px; }

.trial { height: 41px; flex: none; display: grid; place-items: center; background: #eeecee; color: #f94453; font-size: 15px; font-weight: 600; }
.taskbar {
  height: 48px;
  flex: none;
  display: grid;
  grid-template-columns: 1fr auto 1fr;
  border-top: 1px solid #cfdaec;
  background: linear-gradient(90deg, #e3eef9, #d8e3f8 26%, #dbe2f5 70%, #e3edf8);
  color: #222;
  font-size: 11px;
}
.weather { display: flex; align-items: center; gap: 9px; padding-left: 22px; }
.weather svg { width: 20px; height: 20px; }
.dim { color: #666; }
.apps, .pinned { display: flex; align-items: center; }
.apps button { width: 44px; height: 46px; display: grid; place-items: center; position: relative; }
.apps button > svg { width: 24px; height: 24px; }
.tasksearch { width: 216px; height: 30px; display: flex; align-items: center; margin: 0 3px 0 4px; padding-left: 9px; border-radius: 15px; background: #f3f7fd; border-bottom: 1px solid #b9c2d3; overflow: hidden; }
.lens { width: 16px; height: 16px; }
.tasksearch input { flex: 1; padding: 0 10px; font-size: 13px; }
.tasksearch input::placeholder { color: #606060; opacity: 1; }
.art { width: 50px; height: 28px; margin-right: 3px; }
.running::after, .current::after { content: ""; position: absolute; bottom: 3px; left: 19px; width: 6px; height: 3px; border-radius: 2px; background: #777b85; }
.current::after { left: 15px; width: 14px; background: #0e7bd0; }
.current::before { content: ""; position: absolute; inset: 4px 3px; border-radius: 4px; background: #f2f5fc; }
.washapp { position: relative; width: 21px; height: 24px; display: grid; place-items: center; background: #0e86dc; color: #fff; }
.washapp svg { width: 18px; height: 18px; }
.pill { position: absolute; top: 10px; right: 5px; width: 16px; border-radius: 4px; background: #e83a3e; color: #fff; font-size: 9px; line-height: 12px; }
.tray { display: flex; align-items: center; justify-content: flex-end; gap: 8px; padding-right: 20px; }
.tray svg { width: 16px; height: 16px; }
.tray .chev { width: 14px; height: 14px; }
.lang { margin: 0 10px 0 8px; }
.clock { text-align: right; margin-left: 8px; padding-bottom: 2px; }
.notif { width: 16px; height: 16px; border-radius: 50%; background: #0e7bd0; color: #fff; text-align: center; font-size: 10px; }

.activate { position: absolute; left: 1073px; bottom: 82px; color: #8888889c; font-size: 14px; line-height: 20px; white-space: nowrap; }
.activate .big { font-size: 19px; line-height: 24px; }
.stamp { position: absolute; left: 0; right: 0; bottom: 14px; text-align: center; color: #80808033; font-weight: 700; pointer-events: none; }
.ar { font-family: "DejaVu Sans", sans-serif; font-size: 47px; line-height: 52px; }
.en { font-size: 26px; line-height: 32px; }
.cursor { position: absolute; left: 87px; top: 343px; width: 18px; height: 25px; }
```
